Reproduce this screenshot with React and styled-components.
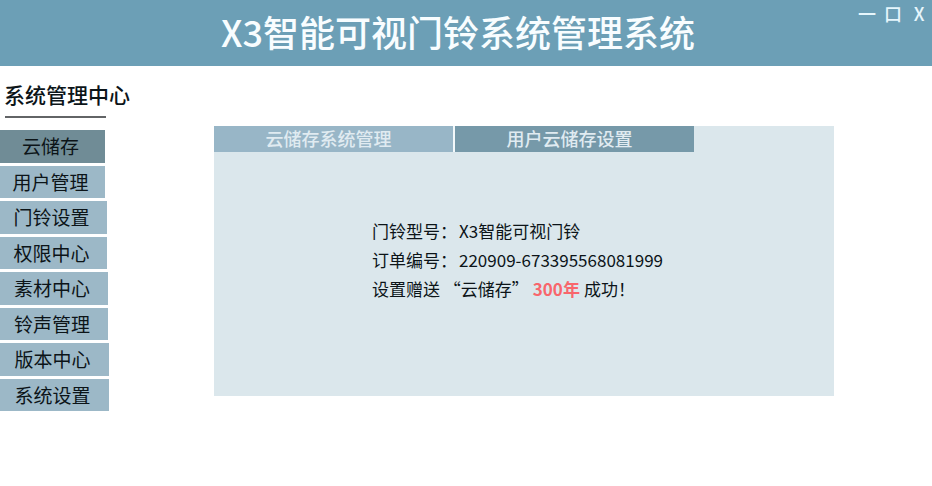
import React, { useState } from "react";
import styled, { createGlobalStyle } from "styled-components";

const GlobalStyle = createGlobalStyle`
  * { box-sizing: border-box; }
  body {
    margin: 0;
    background: #ffffff;
    color: #0c1418;
    font-family: "Noto Sans CJK SC", sans-serif;
  }
  button { font-family: inherit; margin: 0; cursor: pointer; }
`;

const Header = styled.header`
  display: grid;
  grid-template-columns: 1fr auto 1fr;
  height: 66px;
  background: #6c9fb6;
  color: #f8fdff;
`;

const Title = styled.h1`
  grid-column: 2;
  margin: 0;
  padding-right: 16px;
  font-size: 36px;
  font-weight: 500;
  line-height: 62px;
  white-space: nowrap;
`;

const WindowControls = styled.div`
  display: flex;
  justify-content: flex-end;
  align-items: flex-start;
  gap: 8px;
  padding: 3px 4px 0 0;
`;

const WindowButton = styled.button`
  width: 18px;
  padding: 0;
  border: 0;
  background: transparent;
  color: #e6f6fc;
  font-size: 18px;
  font-weight: 500;
  line-height: 20px;
`;

const Body = styled.div`
  display: grid;
  grid-template-columns: 214px minmax(0, 1fr);
  align-items: start;
  padding-right: 98px;
`;

const Sidebar = styled.aside`
  padding-top: 13px;
`;

const SidebarTitle = styled.h2`
  margin: 0 0 7px 4px;
  font-size: 21px;
  font-weight: 500;
  line-height: 30px;
`;

const Rule = styled.hr`
  width: 101px;
  height: 2px;
  margin: 0 0 12px 5px;
  border: 0;
  background: #626466;
`;

const Menu = styled.nav`
  display: flex;
  flex-direction: column;
  align-items: flex-start;
  gap: 3px;
  height: 281px;
`;

const MenuItem = styled.button`
  flex: 1;
  width: ${(p) => p.$width}px;
  padding: 0 4px 0 0;
  border: 0;
  background: ${(p) => (p.$active ? "#708c96" : "#9cb8c7")};
  color: #0c1418;
  font-size: 19px;
  line-height: 32px;
`;

const Panel = styled.main`
  margin-top: 60px;
  min-height: 270px;
  background: #dbe7ec;
`;

const Tabs = styled.div`
  display: grid;
  grid-template-columns: 239px 241px;
`;

const Tab = styled.button`
  height: 26px;
  padding: 0 10px 2px 0;
  border: 0;
  background: ${(p) => (p.$active ? "#7699a9" : "#98b6c7")};
  color: #e0ebf1;
  font-size: 18px;
  font-weight: 500;
  line-height: 24px;

  & + & {
    border-left: 2px solid #f3f9fb;
  }
`;

const Details = styled.div`
  padding: 64px 0 0 158px;
  font-size: 17px;
  line-height: 29px;
`;

const Line = styled.p`
  display: flex;
  margin: 0;
  white-space: pre;
`;

const Label = styled.span`
  min-width: 87px;
`;

const Highlight = styled.strong`
  margin: 0 4px;
  color: #f8666c;
  font-weight: 700;
`;

const menu = [
  ["云储存", 105],
  ["用户管理", 105],
  ["门铃设置", 107],
  ["权限中心", 107],
  ["素材中心", 108],
  ["铃声管理", 108],
  ["版本中心", 109],
  ["系统设置", 109],
];

const tabs = ["云储存系统管理", "用户云储存设置"];

export default function App() {
  const [section, setSection] = useState(0);
  const [tab, setTab] = useState(1);

  return (
    <>
      <GlobalStyle />
      <Header>
        <Title>X3智能可视门铃系统管理系统</Title>
        <WindowControls>
          <WindowButton aria-label="最小化">一</WindowButton>
          <WindowButton aria-label="最大化">口</WindowButton>
          <WindowButton aria-label="关闭">X</WindowButton>
        </WindowControls>
      </Header>
      <Body>
        <Sidebar>
          <SidebarTitle>系统管理中心</SidebarTitle>
          <Rule />
          <Menu>
            {menu.map(([name, width], i) => (
              <MenuItem key={name} $width={width} $active={i === section} onClick={() => setSection(i)}>
                {name}
              </MenuItem>
            ))}
          </Menu>
        </Sidebar>
        <Panel>
          <Tabs role="tablist">
            {tabs.map((name, i) => (
              <Tab key={name} role="tab" aria-selected={i === tab} $active={i === tab} onClick={() => setTab(i)}>
                {name}
              </Tab>
            ))}
          </Tabs>
          <Details>
            <Line><Label>门铃型号：</Label>X3智能可视门铃</Line>
            <Line><Label>订单编号：</Label>220909-673395568081999</Line>
            <Line>设置赠送 “云储存”<Highlight>300年</Highlight>成功！</Line>
          </Details>
        </Panel>
      </Body>
    </>
  );
}
